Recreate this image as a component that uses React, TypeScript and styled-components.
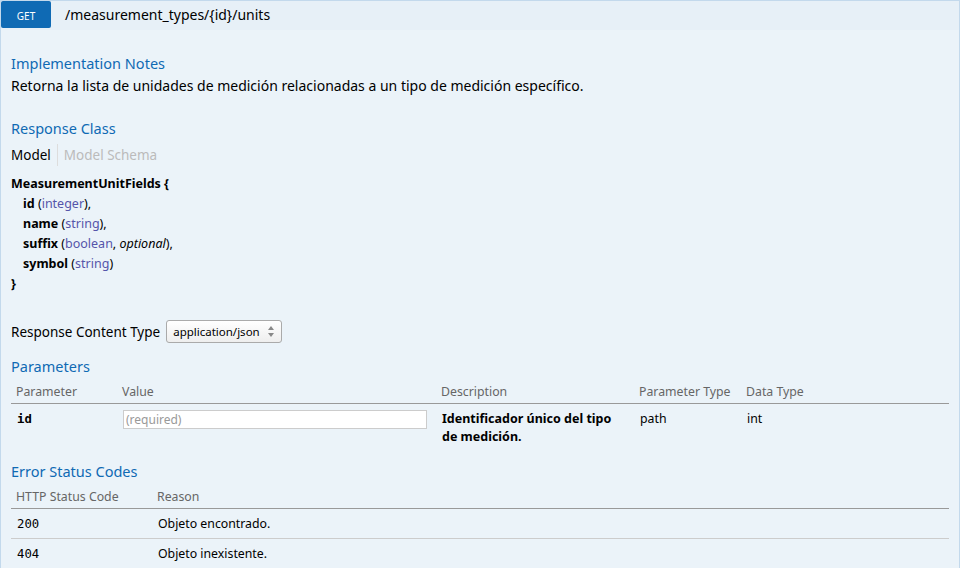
import React from "react";
import styled, { createGlobalStyle } from "styled-components";

const GlobalStyle = createGlobalStyle`
  body {
    margin: 0;
    background: #ffffff;
    font-family: "Noto Sans", "Open Sans", sans-serif;
    font-size: 13px;
    color: #000;
  }
`;

const Operation = styled.div`
  width: 960px;
`;

const Heading = styled.div`
  display: flex;
  align-items: flex-start;
  height: 29px;
  background: #e7f0f7;
  border: 1px solid #c3d9ec;
  border-bottom: none;
`;

const Method = styled.span`
  display: flex;
  align-items: center;
  justify-content: center;
  width: 50px;
  height: 27px;
  padding-top: 2px;
  box-sizing: border-box;
  background: #0f6ab4;
  border-radius: 2px;
  color: #fff;
  font-size: 10px;
  text-transform: uppercase;
`;

const Path = styled.span`
  padding-left: 14px;
  font-size: 14px;
  line-height: 27px;
  color: #000;
`;

const Content = styled.div`
  background: #ebf3f9;
  border: 1px solid #c3d9ec;
  border-top: none;
  padding: 10px 10px 20px;
`;

const SectionTitle = styled.h4<{ $top?: number }>`
  margin: 0;
  padding: ${(p) => p.$top ?? 15}px 0 4px;
  font-size: 14.5px;
  font-weight: normal;
  line-height: 20px;
  color: #0f6ab4;
`;

const Note = styled.p`
  margin: 0 0 8px;
  font-size: 14px;
  line-height: 18px;
  color: #000;
`;

const Tabs = styled.div`
  display: flex;
  align-items: center;
  height: 22px;
  margin-top: 2px;
`;

const Tab = styled.span<{ $active?: boolean }>`
  font-size: 13.5px;
  line-height: 22px;
  color: ${(p) => (p.$active ? "#000" : "#bbbbbb")};
  padding: 0 6px;
  &:first-child {
    padding-left: 0;
  }
  & + & {
    border-left: 1px solid #dddddd;
  }
`;

const ModelBox = styled.div`
  padding: 8px 0 0;
  font-size: 12.5px;
  line-height: 20px;
`;

const Strong = styled.span`
  font-weight: bold;
`;

const Prop = styled.div`
  padding-left: 12px;
`;

const PropType = styled.span`
  color: #5555aa;
`;

const ContentTypeRow = styled.div`
  display: flex;
  align-items: center;
  gap: 6px;
  margin-top: 26px;
  font-size: 13.5px;
`;

const SelectBox = styled.div`
  display: flex;
  align-items: center;
  justify-content: space-between;
  width: 116px;
  height: 23px;
  padding: 0 7px 0 6px;
  box-sizing: border-box;
  border: 1px solid #aaaaaa;
  border-radius: 3px;
  background: linear-gradient(#ffffff, #eeeeee);
  font-size: 11.5px;
`;

const Arrows = () => (
  <svg width="6" height="11" viewBox="0 0 6 11">
    <path d="M3 0 L6 4 L0 4 Z" fill="#888" />
    <path d="M3 11 L6 7 L0 7 Z" fill="#888" />
  </svg>
);

const Table = styled.table`
  width: 100%;
  border-collapse: collapse;
  table-layout: fixed;
`;

const Th = styled.th<{ $w?: number }>`
  box-sizing: border-box;
  width: ${(p) => (p.$w ? `${p.$w}px` : "auto")};
  padding: 4px 5px 3px;
  text-align: left;
  font-size: 12.3px;
  font-weight: normal;
  line-height: 16px;
  color: #666666;
  border-bottom: 1px solid #999999;
`;

const Td = styled.td<{ $bordered?: boolean; $tight?: boolean }>`
  padding: ${(p) => (p.$tight ? "6px 6px 1px" : "6px 6px 5px")};
  vertical-align: top;
  font-size: 12.3px;
  line-height: 18px;
  border-bottom: ${(p) => (p.$bordered ? "1px solid #cccccc" : "none")};
`;

const Code = styled(Td)`
  font-family: "DejaVu Sans Mono", monospace;
  font-size: 12.3px;
  line-height: 18px;
`;

const ParamName = styled(Code)`
  font-weight: bold;
`;

const Desc = styled(Td)`
  font-weight: bold;
  font-size: 12.5px;
`;

const ValueInput = styled.input`
  display: block;
  width: 304px;
  height: 19px;
  box-sizing: border-box;
  margin: 0;
  padding: 0 2px;
  border: 1px solid #cccccc;
  background: #fff;
  font-family: "Noto Sans", sans-serif;
  font-size: 12px;
  &::placeholder {
    color: #999999;
  }
`;

const props = [
  { name: "id", type: "integer" },
  { name: "name", type: "string" },
  { name: "suffix", type: "boolean", optional: true },
  { name: "symbol", type: "string", last: true },
];

const errors = [
  { code: "200", reason: "Objeto encontrado." },
  { code: "404", reason: "Objeto inexistente." },
];

const App = () => {
  return (
    <Operation>
      <GlobalStyle />
      <Heading>
        <Method>GET</Method>
        <Path>/measurement_types/{"{id}"}/units</Path>
      </Heading>
      <Content>
        <SectionTitle $top={13}>Implementation Notes</SectionTitle>
        <Note>
          Retorna la lista de unidades de medición relacionadas a un tipo de
          medición específico.
        </Note>

        <SectionTitle>Response Class</SectionTitle>
        <Tabs>
          <Tab $active>Model</Tab>
          <Tab>Model Schema</Tab>
        </Tabs>
        <ModelBox>
          <Strong>MeasurementUnitFields {"{"}</Strong>
          {props.map((p) => (
            <Prop key={p.name}>
              <Strong>{p.name}</Strong> (<PropType>{p.type}</PropType>
              {p.optional && (
                <>
                  , <i>optional</i>
                </>
              )}
              ){p.last ? "" : ","}
            </Prop>
          ))}
          <Strong>{"}"}</Strong>
        </ModelBox>

        <ContentTypeRow>
          Response Content Type
          <SelectBox>
            application/json
            <Arrows />
          </SelectBox>
        </ContentTypeRow>

        <SectionTitle $top={13}>Parameters</SectionTitle>
        <Table>
          <thead>
            <tr>
              <Th $w={106}>Parameter</Th>
              <Th $w={319}>Value</Th>
              <Th $w={198}>Description</Th>
              <Th $w={107}>Parameter Type</Th>
              <Th>Data Type</Th>
            </tr>
          </thead>
          <tbody>
            <tr>
              <ParamName $tight>id</ParamName>
              <Td $tight>
                <ValueInput placeholder="(required)" />
              </Td>
              <Desc $tight>
                Identificador único del tipo
                <br />
                de medición.
              </Desc>
              <Td $tight>path</Td>
              <Td $tight>int</Td>
            </tr>
          </tbody>
        </Table>

        <SectionTitle $top={14}>Error Status Codes</SectionTitle>
        <Table>
          <thead>
            <tr>
              <Th $w={141}>HTTP Status Code</Th>
              <Th>Reason</Th>
            </tr>
          </thead>
          <tbody>
            {errors.map((e, i) => (
              <tr key={e.code}>
                <Code $bordered={i < errors.length - 1}>{e.code}</Code>
                <Td $bordered={i < errors.length - 1}>{e.reason}</Td>
              </tr>
            ))}
          </tbody>
        </Table>
      </Content>
    </Operation>
  );
};

export default App;
